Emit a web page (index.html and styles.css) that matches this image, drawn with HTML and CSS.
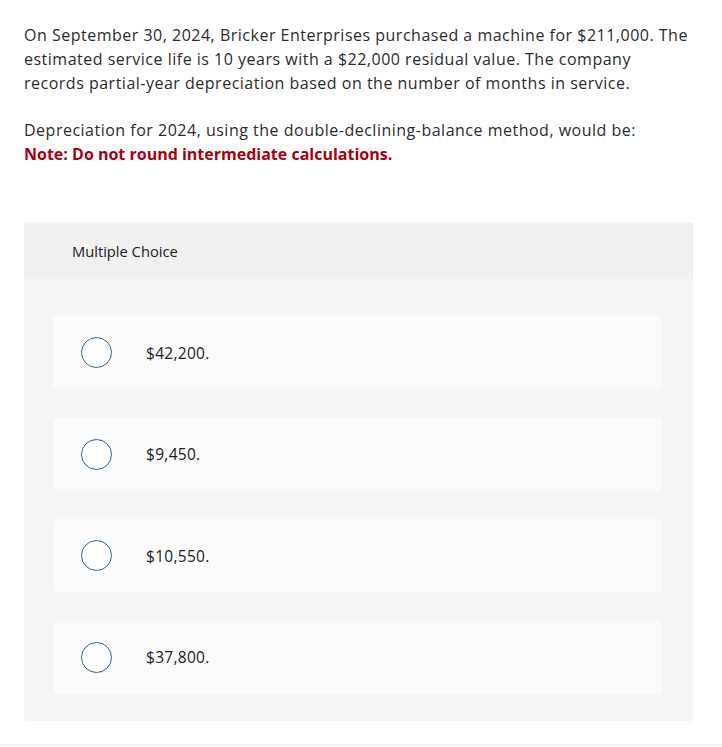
FILE: index.html
```html
<!DOCTYPE html>
<html>
<head>
<meta charset="utf-8">
<link rel="stylesheet" href="styles.css">
</head>
<body>
<div class="page">
  <div class="question">
    <p class="para">On September 30, 2024, Bricker Enterprises purchased a machine for $211,000. The estimated service life is 10 years with a $22,000 residual value. The company records partial-year depreciation based on the number of months in service.</p>
    <p class="para">Depreciation for 2024, using the double-declining-balance method, would be:<br><span class="note">Note: Do not round intermediate calculations.</span></p>
  </div>
  <div class="panel">
    <div class="panel-head">Multiple Choice</div>
    <div class="panel-body">
      <div class="choice"><span class="radio"></span><span class="label">$42,200.</span></div>
      <div class="choice"><span class="radio"></span><span class="label">$9,450.</span></div>
      <div class="choice"><span class="radio"></span><span class="label">$10,550.</span></div>
      <div class="choice"><span class="radio"></span><span class="label">$37,800.</span></div>
    </div>
  </div>
</div>
<div class="bottom-line"></div>
</body>
</html>
```

FILE: styles.css
```css
html, body {
  margin: 0;
  padding: 0;
  background: #fff;
}
.page {
  padding: 23px 29px 0 24px;
  height: 740px;
  box-sizing: border-box;
}
.question {
  font-family: "Open Sans", "Liberation Sans", sans-serif;
  font-size: 16px;
  line-height: 24px;
  color: #2b2b2b;
  letter-spacing: 0.5px;
  padding-right: 4px;
}
.para {
  margin: 0 0 23px 0;
}
.note {
  color: #a8000d;
  font-weight: 700;
  letter-spacing: 0;
}
.panel {
  margin-top: 57px;
  border-radius: 3px;
  overflow: hidden;
  background: #f5f5f5;
}
.panel-head {
  background: #f0f0f0;
  height: 56px;
  display: flex;
  align-items: center;
  padding-left: 48px;
  font-family: "Open Sans", "Liberation Sans", sans-serif;
  font-size: 14.7px;
  color: #222;
}
.panel-body {
  padding: 37px 31px 27px 29px;
  display: flex;
  flex-direction: column;
  gap: 28.5px;
}
.choice {
  background: #fafafa;
  border-radius: 4px;
  height: 73px;
  display: flex;
  align-items: center;
  padding-left: 28px;
}
.radio {
  width: 29px;
  height: 29px;
  border: 1.3px solid #2e6296;
  border-radius: 50%;
  background: #fff;
  flex: none;
}
.label {
  margin-left: 34px;
  font-family: "Open Sans", "Liberation Sans", sans-serif;
  font-size: 15.5px;
  letter-spacing: 0.3px;
  color: #222;
}
.bottom-line {
  height: 2px;
  background: #f0f0f0;
  margin-top: 4px;
}
```
